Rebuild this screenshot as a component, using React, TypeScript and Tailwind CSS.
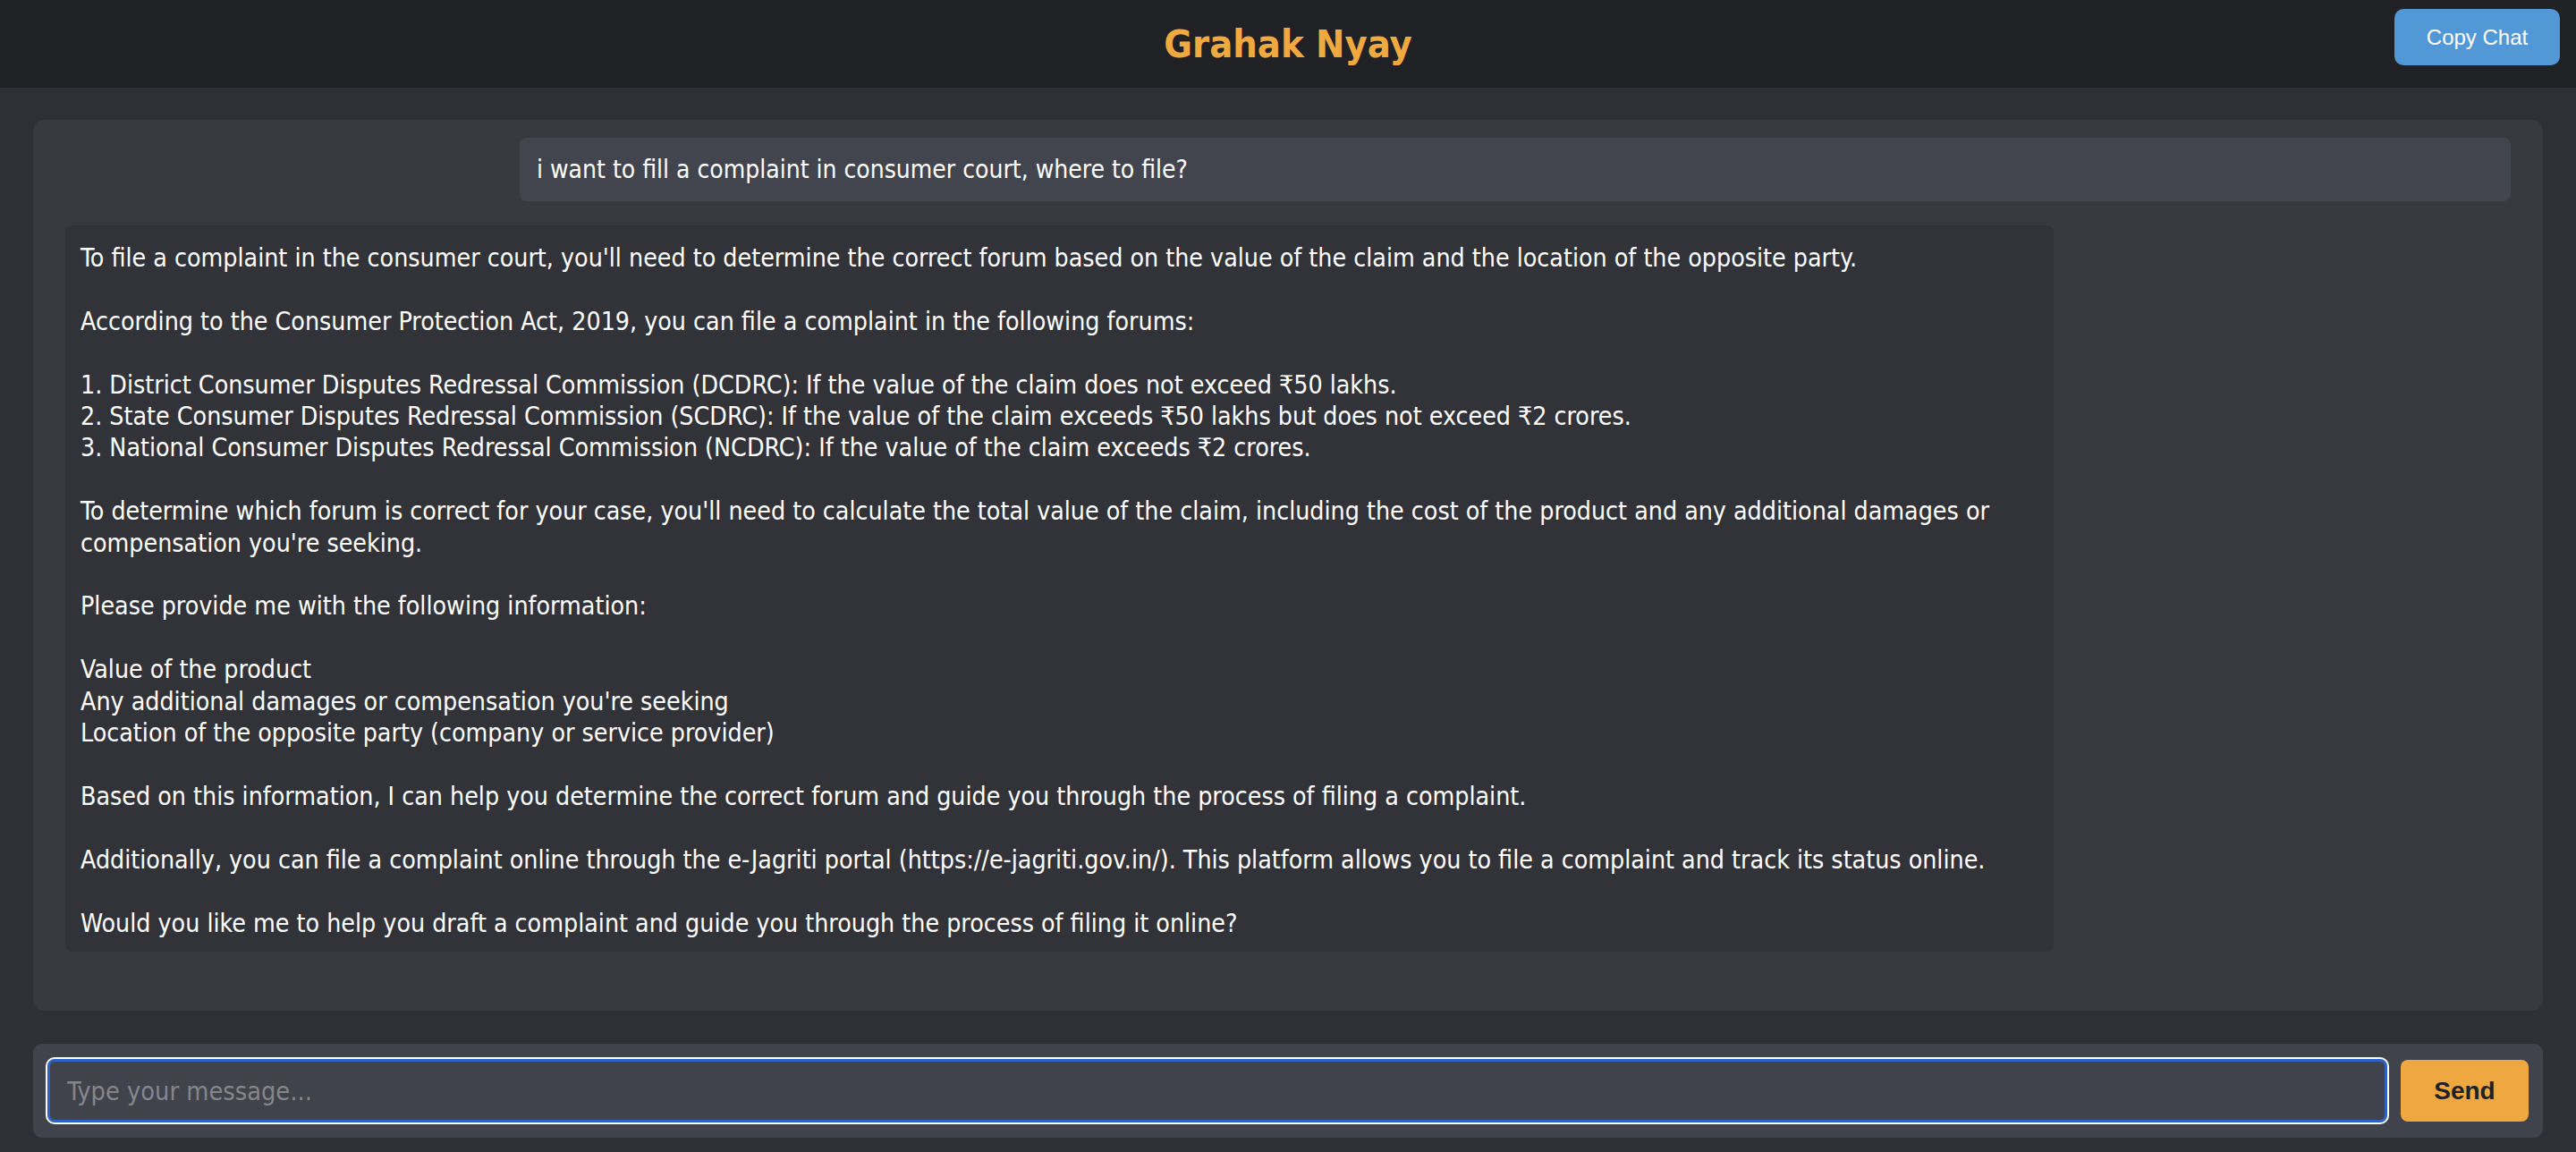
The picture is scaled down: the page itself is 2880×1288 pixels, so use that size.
import { useState } from "react";

const reply = `To file a complaint in the consumer court, you'll need to determine the correct forum based on the value of the claim and the location of the opposite party.

According to the Consumer Protection Act, 2019, you can file a complaint in the following forums:

1. District Consumer Disputes Redressal Commission (DCDRC): If the value of the claim does not exceed ₹50 lakhs.
2. State Consumer Disputes Redressal Commission (SCDRC): If the value of the claim exceeds ₹50 lakhs but does not exceed ₹2 crores.
3. National Consumer Disputes Redressal Commission (NCDRC): If the value of the claim exceeds ₹2 crores.

To determine which forum is correct for your case, you'll need to calculate the total value of the claim, including the cost of the product and any additional damages or
compensation you're seeking.

Please provide me with the following information:

Value of the product
Any additional damages or compensation you're seeking
Location of the opposite party (company or service provider)

Based on this information, I can help you determine the correct forum and guide you through the process of filing a complaint.

Additionally, you can file a complaint online through the e-Jagriti portal (https://e-jagriti.gov.in/). This platform allows you to file a complaint and track its status online.

Would you like me to help you draft a complaint and guide you through the process of filing it online?`;

const messages = [
  { role: "user", text: "i want to fill a complaint in consumer court, where to file?" },
  { role: "bot", text: reply }
];

export default function App() {
  const [draft, setDraft] = useState("");
  return (
    <div className="flex h-screen flex-col bg-[#2f3035] font-['DejaVu_Sans_Condensed','DejaVu_Sans',sans-serif] text-white">
      <header className="relative flex h-[98px] shrink-0 items-center justify-center bg-[#202125]">
        <h1 className="text-[43px] font-bold text-[#f0a93e]">Grahak Nyay</h1>
        <button className="absolute right-[18px] top-[10px] h-[63px] w-[185px] rounded-[10px] bg-[#5298d6] font-['Liberation_Sans',Arial,sans-serif] text-[24px] text-white">
          Copy Chat
        </button>
      </header>

      <main className="flex min-h-0 flex-1 flex-col gap-[37px] px-[37px] pb-[16px] pt-[36px]">
        <div className="flex min-h-0 flex-1 flex-col gap-[27px] overflow-y-auto rounded-[12px] bg-[#38393e] px-[36px] pt-[20px]">
          {messages.map((m, i) =>
            m.role === "user" ? (
              <div key={i} className="w-[2226px] self-end rounded-[8px] bg-[#42454d] px-[19px] py-[18px] text-[28px] leading-[35px]">
                {m.text}
              </div>
            ) : (
              <div key={i} className="w-[2223px] whitespace-pre-wrap rounded-[8px] bg-[#323338] px-[17px] pb-[14px] pt-[19px] text-[28.3px] leading-[35.4px]">
                {m.text}
              </div>
            )
          )}
        </div>

        <div className="flex h-[105px] shrink-0 items-center gap-[15px] rounded-[10px] bg-[#40434b] pl-[16px] pr-[16px]">
          <input
            value={draft}
            onChange={(e) => setDraft(e.target.value)}
            placeholder="Type your message..."
            className="h-[71px] flex-1 rounded-[8px] border-[3px] border-[#2d63c8] bg-[#40434b] px-[19px] text-[28.7px] text-white outline-2 outline-white placeholder:text-[#85868b]"
          />
          <button className="h-[69px] w-[143px] rounded-[8px] bg-[#eea83f] font-['Liberation_Sans',Arial,sans-serif] text-[28px] font-bold text-[#202125]">
            Send
          </button>
        </div>
      </main>
    </div>
  );
}
